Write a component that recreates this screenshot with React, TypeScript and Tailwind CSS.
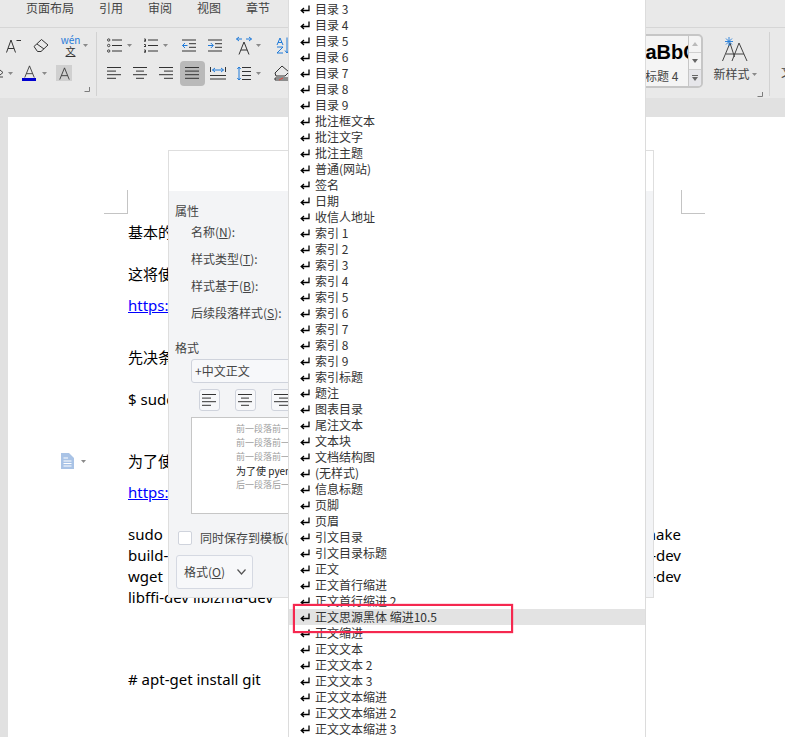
import React from "react";

const cjk = "font-['Noto_Sans_CJK_SC','Noto_Sans',sans-serif]";

const styleNames = [
  "目录 3", "目录 4", "目录 5", "目录 6", "目录 7", "目录 8", "目录 9",
  "批注框文本", "批注文字", "批注主题", "普通(网站)", "签名", "日期", "收信人地址",
  "索引 1", "索引 2", "索引 3", "索引 4", "索引 5", "索引 6", "索引 7", "索引 8", "索引 9",
  "索引标题", "题注", "图表目录", "尾注文本", "文本块", "文档结构图", "(无样式)", "信息标题",
  "页脚", "页眉", "引文目录", "引文目录标题", "正文", "正文首行缩进", "正文首行缩进 2",
  "正文思源黑体 缩进10.5", "正文缩进", "正文文本", "正文文本 2", "正文文本 3",
  "正文文本缩进", "正文文本缩进 2", "正文文本缩进 3",
];

const Arrow = ({ className = "" }: { className?: string }) => (
  <svg width="5" height="3" viewBox="0 0 5 3" className={`shrink-0 ${className}`}>
    <path d="M0 0h5L2.5 3z" fill="#8a8a8a" />
  </svg>
);

const Corner = () => (
  <svg width="6" height="5" viewBox="0 0 6 5" className="shrink-0">
    <path d="M0.5 4.5H5.5V0" fill="none" stroke="#7c7c7c" />
  </svg>
);

const Align = ({ rows, className = "" }: { rows: [number, number][]; className?: string }) => (
  <svg width="15" height="14" viewBox="0 0 15 14" className={`shrink-0 ${className}`}>
    {rows.map(([a, b], i) => (
      <path key={i} d={`M${a} ${1.5 + i * 3.6}H${b}`} stroke="#333" strokeWidth="1" />
    ))}
  </svg>
);

const alignLeft: [number, number][] = [[0, 14], [0, 9], [0, 14], [0, 9]];
const alignCenter: [number, number][] = [[0, 14], [3, 11], [0, 14], [3, 11]];
const alignRight: [number, number][] = [[0, 14], [5, 14], [0, 14], [5, 14]];
const alignFull: [number, number][] = [[0, 14], [0, 14], [0, 14], [0, 14]];

const ReturnMark = () => (
  <svg width="10" height="9" viewBox="0 0 10 9" className="shrink-0">
    <path d="M9 0.5V5.5H1.5M4 3L1.2 5.5L4 8" fill="none" stroke="#000" strokeWidth="1.3" />
  </svg>
);

const Bullets = ({ numbered }: { numbered?: boolean }) => (
  <svg width="15" height="15" viewBox="0 0 15 15" className="shrink-0">
    {[2, 7.5, 13].map((y) => (
      <React.Fragment key={y}>
        {numbered ? (
          <path d={`M1 ${y - 1}h1.5v2H1m2 0h-2`} fill="none" stroke="#333" strokeWidth="0.9" />
        ) : (
          <circle cx="1.7" cy={y} r="1.2" fill="none" stroke="#333" strokeWidth="0.9" />
        )}
        <path d={`M5 ${y}H15`} stroke="#333" />
      </React.Fragment>
    ))}
  </svg>
);

const Indent = ({ out }: { out?: boolean }) => (
  <svg width="15" height="13" viewBox="0 0 15 13" className="shrink-0">
    <path d="M0 1H14M7 4.7H14M7 8.3H14M0 12H14" stroke="#333" />
    <path d={out ? "M5.5 6.5H0.5M3 4L0.5 6.5L3 9" : "M0 6.5H5M2.8 4L5.3 6.5L2.8 9"} fill="none" stroke="#1f7ad9" />
  </svg>
);

const LetterA = ({ size = 15 }: { size?: number }) => (
  <svg width={size} height={size} viewBox="0 0 15 15" className="shrink-0">
    <path d="M2 14.5L7.5 1L13 14.5M4 10H11" fill="none" stroke="#333" strokeWidth="1" />
  </svg>
);

const Row = ({ children, className = "" }: { children: React.ReactNode; className?: string }) => (
  <div className={`flex h-[26px] items-center ${className}`}>{children}</div>
);

const Ribbon = () => (
  <div className={`bg-[#e9e9e9] ${cjk}`}>
    <div className="flex h-[28px] gap-[25px] border-b border-[#d6d6d6] pl-[26px] text-[12px] leading-[15px] text-[#444]">
      <span>页面布局</span>
      <span>引用</span>
      <span>审阅</span>
      <span>视图</span>
      <span>章节</span>
    </div>
    <div className="flex h-[70px] pt-[4px]">
      <div className="h-[64px] w-[97px] shrink-0 border-r border-[#d2d2d2]">
        <Row>
          <svg width="15" height="15" viewBox="0 0 15 15" className="ml-[6px] shrink-0">
            <path d="M0.5 14.5L5 2L9.5 14.5M2 10.5H8M10.5 2.5H15" fill="none" stroke="#333" />
          </svg>
          <svg width="16" height="15" viewBox="0 0 16 15" className="ml-[12px] shrink-0">
            <path d="M1 8.5L8.5 1.5L15 7L8 13.5H4.5zM4 6L11 11" fill="none" stroke="#333" />
          </svg>
          <div className="ml-[13px] flex h-[21px] w-[17px] shrink-0 flex-col items-center">
            <span className="text-[10px] leading-[10px] text-[#1f7ad9]">wén</span>
            <span className="text-[10px] leading-[11px] text-[#333] underline">文</span>
          </div>
          <Arrow className="ml-[4px]" />
        </Row>
        <Row className="mt-[2px]">
          <svg width="4" height="9" viewBox="0 0 4 9" className="shrink-0">
            <path d="M0 1L3 3.5L0 6M0 8H3" fill="none" stroke="#444" />
          </svg>
          <Arrow className="ml-[4px]" />
          <div className="ml-[9px] flex w-[14px] flex-col items-center">
            <LetterA size={13} />
            <div className="h-[3px] w-[14px] bg-[#0000d0]" />
          </div>
          <Arrow className="ml-[6px]" />
          <div className="ml-[9px] flex h-[16px] w-[16px] items-center justify-center bg-[#d0d0d0]">
            <LetterA size={13} />
          </div>
        </Row>
        <div className="mt-[1px] flex justify-end pr-[6px]">
          <Corner />
        </div>
      </div>
      <div className="w-[300px] shrink-0 pl-[10px]">
        <Row>
          <Bullets />
          <Arrow className="ml-[5px]" />
          <div className="w-[11px] shrink-0" />
          <Bullets numbered />
          <Arrow className="ml-[5px]" />
          <div className="w-[14px] shrink-0" />
          <Indent out />
          <div className="w-[11px] shrink-0" />
          <Indent />
          <svg width="16" height="19" viewBox="0 0 16 19" className="ml-[13px] shrink-0">
            <path d="M3 18.5L8 6L13 18.5M5 14H11" fill="none" stroke="#333" />
            <path d="M0.5 3H6M3 1L0.5 3L3 5M10 3H15.5M13 1L15.5 3L13 5" fill="none" stroke="#1f7ad9" />
          </svg>
          <Arrow className="ml-[4px]" />
          <svg width="14" height="17" viewBox="0 0 14 17" className="ml-[15px] shrink-0">
            <path d="M1 8L4 1L7 8M2 5.5H6M1 10H7L1 16H7" fill="none" stroke="#1f7ad9" />
            <path d="M11 0.5V16M9 13.5L11 16L13 13.5" fill="none" stroke="#1f7ad9" />
          </svg>
        </Row>
        <Row className="mt-[2px]">
          <Align rows={alignLeft} />
          <Align rows={alignCenter} className="ml-[11px]" />
          <Align rows={alignRight} className="ml-[11px]" />
          <div className="ml-[6px] flex h-[25px] w-[25px] shrink-0 items-center justify-center rounded-[4px] bg-[#b9b9b9]">
            <Align rows={alignFull} />
          </div>
          <svg width="16" height="13" viewBox="0 0 16 13" className="ml-[5px] shrink-0">
            <path d="M0.5 0V5M15.5 0V5M0 8.5H16M0 12H16" stroke="#333" />
            <path d="M2.5 3H13.5M5 1L2.5 3L5 5M11 1L13.5 3L11 5" fill="none" stroke="#1f7ad9" />
          </svg>
          <svg width="14" height="15" viewBox="0 0 14 15" className="ml-[11px] shrink-0">
            <path d="M5 1.5H14M5 5.5H14M5 9.5H14M5 13.5H14" stroke="#333" />
            <path d="M2 1V14M0.3 3L2 1L3.7 3M0.3 12L2 14L3.7 12" fill="none" stroke="#1f7ad9" />
          </svg>
          <Arrow className="ml-[5px]" />
          <svg width="16" height="16" viewBox="0 0 16 16" className="ml-[13px] shrink-0">
            <path d="M1 8L8 1L15 7L11 11H2zM1 13H15V15H1z" fill="none" stroke="#333" />
            <path d="M5 15L9 13" stroke="#e0483c" />
          </svg>
        </Row>
      </div>
      <div className="ml-auto flex h-[64px] shrink-0">
        <div className="mt-[2px] flex h-[54px] w-[83px] overflow-hidden rounded-[5px] border-2 border-[#c6c6c6] bg-[#f4f4f4]">
          <div className="w-[66px] overflow-hidden">
            <div className="whitespace-nowrap pl-[9px] pt-[2px] font-['Liberation_Sans',sans-serif] text-[20px] leading-[28px] font-bold text-black">
              AaBbCcDd
            </div>
            <div className="mt-[3px] whitespace-nowrap pl-[23px] text-[12px] leading-[14px] text-[#444]">标题 4</div>
          </div>
          <div className="ml-auto flex w-[13px] shrink-0 flex-col border-l border-[#c6c6c6]">
            <div className="flex h-[17px] items-center justify-center border-b border-[#d0d0d0]">
              <svg width="6" height="4" viewBox="0 0 6 4"><path d="M3 0L6 4H0z" fill="#bbb" /></svg>
            </div>
            <div className="flex h-[17px] items-center justify-center border-b border-[#d0d0d0]">
              <svg width="6" height="4" viewBox="0 0 6 4"><path d="M3 4L6 0H0z" fill="#666" /></svg>
            </div>
            <div className="flex flex-1 flex-col items-center justify-center gap-[1px] bg-[#e6e6ea]">
              <div className="h-[1px] w-[6px] bg-[#666]" />
              <svg width="6" height="4" viewBox="0 0 6 4"><path d="M3 4L6 0H0z" fill="#666" /></svg>
            </div>
          </div>
        </div>
        <div className="w-[66px] shrink-0">
          <div className="flex h-[32px] justify-center pr-[2px] pt-[5px]">
            <svg width="26" height="24" viewBox="0 0 26 24">
              <path d="M0.5 24L8 6L12.5 20M4 17H13M10 24L17 6L25 24M12.5 17H22" fill="none" stroke="#444" />
              <path d="M7 0V9M3 4.5H11M4 1.5L10 7.5M10 1.5L4 7.5" stroke="#1f7ad9" strokeWidth="0.9" />
            </svg>
          </div>
          <div className="mt-[3px] flex items-center justify-center gap-[2px] pr-[2px] text-[12px] leading-[14px] text-[#444]">
            <span className="whitespace-nowrap">新样式</span>
            <Arrow />
          </div>
          <div className="mt-[11px] flex justify-end pr-[6px]">
            <Corner />
          </div>
        </div>
        <div className="h-[64px] w-[16px] shrink-0 overflow-hidden border-l border-[#d2d2d2] pl-[11px] pt-[33px] text-[12px] leading-[14px] text-[#444]">
          文
        </div>
      </div>
    </div>
    <div className="h-[19px] bg-[#e1e1e1]" />
  </div>
);

const DocLine = ({ className = "", children }: { className?: string; children: React.ReactNode }) => (
  <div className={`relative h-[21px] whitespace-nowrap text-[15px] leading-[21px] ${className}`}>{children}</div>
);

const Page = () => (
  <div className="ml-[8px] h-[620px] bg-white pl-[96px] pr-[80px] font-['Noto_Sans','Noto_Sans_CJK_SC',sans-serif] text-black">
    <div className="pt-[73px]">
      <div className="flex justify-between">
        <div className="h-[24px] w-[24px] border-b border-r border-[#c4c4c4]" />
        <div className="h-[24px] w-[24px] border-b border-l border-[#c4c4c4]" />
      </div>
    </div>
    <div className="px-[24px]">
      <DocLine className="mt-[8px] text-[14px]">基本的</DocLine>
      <DocLine className="mt-[21px] text-[14px]">这将使</DocLine>
      <DocLine className="mt-[10px] text-[#0000ff] underline">https://</DocLine>
      <DocLine className="mt-[31px] text-[14px]">先决条</DocLine>
      <DocLine className="mt-[21px]">$ sudo</DocLine>
      <DocLine className="mt-[41px] text-[14px]">
        <div className="absolute left-[-67px] top-[2px] flex items-center gap-[7px]">
          <svg width="13" height="16" viewBox="0 0 13 16">
            <path d="M0 0H8L13 5V16H0z" fill="#a9c3e6" />
            <path d="M2.5 5H7M2.5 8H10.5M2.5 10.5H10.5M2.5 13H10.5" stroke="#fff" />
          </svg>
          <Arrow />
        </div>
        为了使
      </DocLine>
      <DocLine className="mt-[10px] text-[#0000ff] underline">https://</DocLine>
      <DocLine className="mt-[21px] flex justify-between"><span>sudo</span><span>make</span></DocLine>
      <DocLine className="flex justify-between"><span>build-essential</span><span>-dev</span></DocLine>
      <DocLine className="flex justify-between"><span>wget</span><span>-dev</span></DocLine>
      <DocLine>libffi-dev liblzma-dev</DocLine>
      <DocLine className="mt-[61px]"># apt-get install git</DocLine>
    </div>
  </div>
);

const Field = ({ className, text, hot, end = "" }: { className: string; text: string; hot: string; end?: string }) => (
  <div className={`h-[16px] whitespace-nowrap pl-[16px] text-[12px] leading-[16px] ${className}`}>
    {text}(<span className="underline">{hot}</span>){end}
  </div>
);

const AlignButton = ({ rows }: { rows: [number, number][] }) => (
  <div className="flex h-[22px] w-[21px] shrink-0 items-center justify-center rounded-[3px] border border-[#cfd3dc] bg-[#f7f8fa]">
    <Align rows={rows} />
  </div>
);

const Dialog = () => (
  <div className={`absolute left-[168px] top-[150px] h-[448px] w-[486px] overflow-hidden border border-[#dedede] bg-white text-[#444] ${cjk}`}>
    <div className="h-[40px]" />
    <div className="h-[406px] bg-[#f3f4f6] pl-[6px] pt-[12px]">
      <div className="h-[16px] text-[12px] leading-[16px]">属性</div>
      <Field className="mt-[5px]" text="名称" hot="N" end=":" />
      <Field className="mt-[11px]" text="样式类型" hot="T" end=":" />
      <Field className="mt-[11px]" text="样式基于" hot="B" end=":" />
      <Field className="mt-[11px]" text="后续段落样式" hot="S" end=":" />
      <div className="mt-[19px] h-[16px] text-[12px] leading-[16px]">格式</div>
      <div className="ml-[16px] mt-[3px] flex h-[24px] w-[300px] items-center rounded-[3px] border border-[#cfd3dc] bg-[#f7f8fa] pl-[3px] text-[12px]">
        +中文正文
      </div>
      <div className="ml-[24px] mt-[6px] flex gap-[15px]">
        <AlignButton rows={alignLeft} />
        <AlignButton rows={alignCenter} />
        <AlignButton rows={alignRight} />
      </div>
      <div className="ml-[16px] mt-[6px] h-[97px] w-[300px] border border-[#c6c6c6] bg-white pl-[44px] pt-[4px] text-[9px] leading-[14px] text-[#a0a0a0]">
        <div>前一段落前一段落</div>
        <div>前一段落前一段落</div>
        <div>前一段落前一段落</div>
        <div className="text-[10px] text-[#222]">为了使 pyenv</div>
        <div>后一段落后一段落</div>
      </div>
      <div className="mt-[16px] flex h-[16px] items-center pl-[3px]">
        <div className="h-[14px] w-[14px] shrink-0 rounded-[2px] border border-[#cfd3dc] bg-white" />
        <span className="ml-[8px] whitespace-nowrap text-[12px] leading-[16px]">同时保存到模板(A)</span>
      </div>
      <div className="ml-[1px] mt-[9px] flex h-[34px] w-[77px] items-center justify-between rounded-[3px] border border-[#d5d9e2] bg-[#f7f8fa] pl-[7px] pr-[6px] text-[12px]">
        <span>格式(<span className="underline">O</span>)</span>
        <svg width="9" height="6" viewBox="0 0 9 6"><path d="M0.5 0.5L4.5 5L8.5 0.5" fill="none" stroke="#555" strokeWidth="1.2" /></svg>
      </div>
    </div>
  </div>
);

const StyleList = () => (
  <div className={`absolute left-[288px] top-0 h-[737px] w-[358px] overflow-hidden border-x border-[#dcdcdc] bg-white pt-[1px] ${cjk}`}>
    {styleNames.map((name) => (
      <div
        key={name}
        className={`flex h-[16px] items-center gap-[5px] whitespace-nowrap pl-[11px] text-[12px] leading-[16px] text-[#333] ${
          name.startsWith("正文思源") ? "bg-[#e3e3e3]" : ""
        }`}
      >
        <ReturnMark />
        <span>{name}</span>
      </div>
    ))}
  </div>
);

export default function App() {
  return (
    <div className="relative h-[737px] w-[785px] overflow-hidden bg-[#e1e1e1]">
      <Ribbon />
      <Page />
      <Dialog />
      <StyleList />
      <div className="absolute left-[293px] top-[604px] h-[29px] w-[220px] border-2 border-[#f5284f] shadow-[0_0_1px_#f5284f]" />
    </div>
  );
}
